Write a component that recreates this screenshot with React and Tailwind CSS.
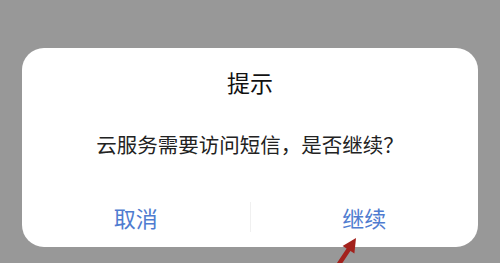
import React from 'react';

const App = () => {
  return (
    <div
      className="relative h-[263px] w-[500px] overflow-hidden bg-[#989898] px-[22px] pt-[48px]"
      style={{ fontFamily: '"Noto Sans CJK SC", "Noto Sans", sans-serif' }}
    >
      {/* Dialog */}
      <div className="flex h-[199px] flex-col rounded-[22px] bg-white">
        <div className="pt-[20px] text-center text-[23px] leading-[28px] text-[#111]">
          提示
        </div>
        <div className="mt-[36px] text-center text-[20.5px] leading-[24px] text-[#222]">
          云服务需要访问短信，是否继续？
        </div>
        <div className="mt-[31px] flex h-[60px] items-center">
          <button className="flex-1 text-center text-[22px] leading-[26px] text-[#4f7cd0]">
            取消
          </button>
          <div className="h-[30px] w-px bg-[#f0f0f0]" />
          <button className="flex-1 text-center text-[22px] leading-[26px] text-[#4f7cd0]">
            继续
          </button>
        </div>
      </div>

      {/* Annotation arrow */}
      <svg
        className="absolute left-[330px] top-[230px]"
        width="34"
        height="33"
        viewBox="0 0 34 33"
      >
        <path d="M19 19 L9 34" stroke="#a3211c" strokeWidth="4.5" strokeLinecap="round" />
        <path d="M26 8 L24.4 23.6 L12.6 16 Z" fill="#a3211c" />
      </svg>
    </div>
  );
};

export default App;
